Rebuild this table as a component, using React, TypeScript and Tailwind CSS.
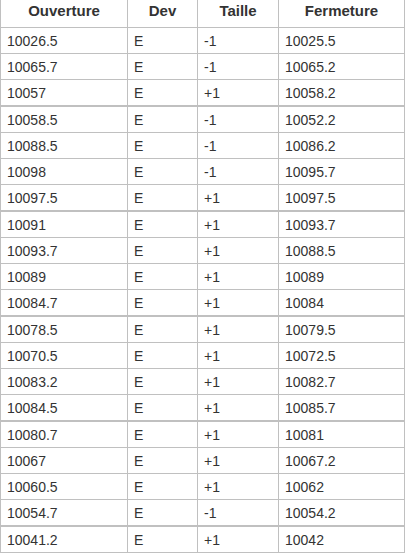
import React from "react";

const rows: [string, string, string, string][] = [
  ["10026.5", "E", "-1", "10025.5"],
  ["10065.7", "E", "-1", "10065.2"],
  ["10057", "E", "+1", "10058.2"],
  ["10058.5", "E", "-1", "10052.2"],
  ["10088.5", "E", "-1", "10086.2"],
  ["10098", "E", "-1", "10095.7"],
  ["10097.5", "E", "+1", "10097.5"],
  ["10091", "E", "+1", "10093.7"],
  ["10093.7", "E", "+1", "10088.5"],
  ["10089", "E", "+1", "10089"],
  ["10084.7", "E", "+1", "10084"],
  ["10078.5", "E", "+1", "10079.5"],
  ["10070.5", "E", "+1", "10072.5"],
  ["10083.2", "E", "+1", "10082.7"],
  ["10084.5", "E", "+1", "10085.7"],
  ["10080.7", "E", "+1", "10081"],
  ["10067", "E", "+1", "10067.2"],
  ["10060.5", "E", "+1", "10062"],
  ["10054.7", "E", "-1", "10054.2"],
  ["10041.2", "E", "+1", "10042"],
];

const headers = ["Ouverture", "Dev", "Taille", "Fermeture"];

export default function App() {
  return (
    <div className="bg-white w-[407px] h-[554px] overflow-hidden text-[#333]" style={{ fontFamily: '"Liberation Sans", Arial, sans-serif' }}>
      <div className="w-[405px] border-l border-[#c0c0c0]">
        <div className="grid grid-cols-[127px_70px_81px_126px] border-b border-[#c0c0c0]">
          {headers.map((h) => (
            <div
              key={h}
              className="h-[27px] border-r border-[#c0c0c0] flex justify-center items-start pt-[2px] text-[15px] leading-[17px] font-bold text-[#333]"
            >
              {h}
            </div>
          ))}
        </div>
        {rows.map((r, i) => (
          <div
            key={i}
            className={
              i % 4 === 2
                ? "grid grid-cols-[127px_70px_81px_126px] border-b-2 border-[#c0c0c0]"
                : "grid grid-cols-[127px_70px_81px_126px] border-b border-[#c0c0c0]"
            }
          >
            {r.map((c, j) => (
              <div
                key={j}
                className="h-[25px] border-r border-[#c0c0c0] flex items-center pl-[6px] text-[14px] leading-[16px] text-[#333]"
              >
                {c}
              </div>
            ))}
          </div>
        ))}
      </div>
    </div>
  );
}
